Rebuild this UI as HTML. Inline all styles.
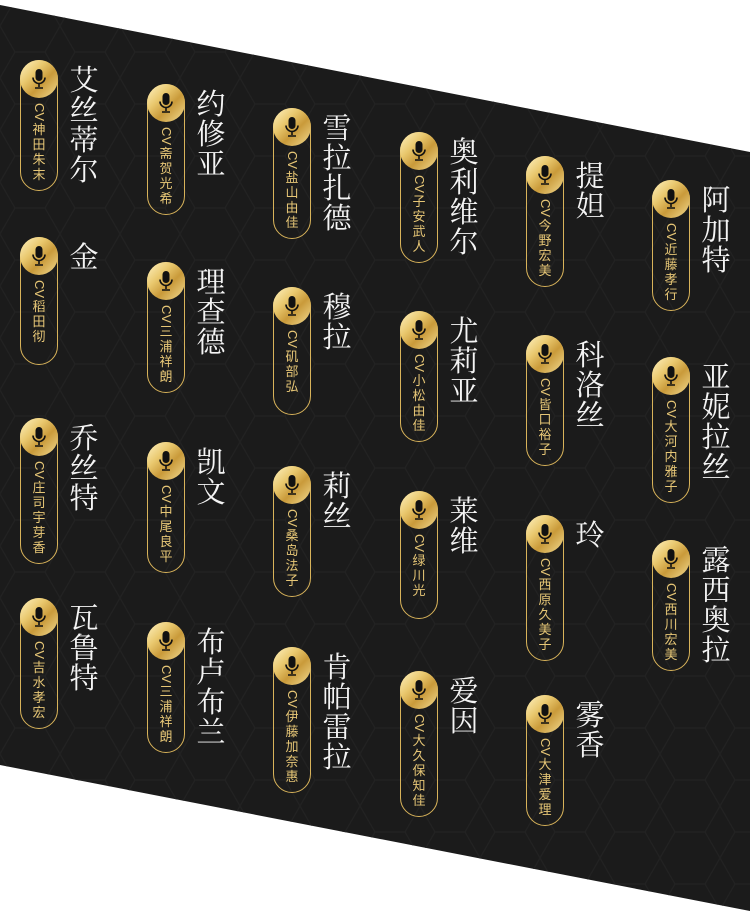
<!DOCTYPE html>
<html><head><meta charset="utf-8"><style>
html,body{margin:0;padding:0;background:#fff;width:750px;height:911px;overflow:hidden;position:relative}
.bg{position:absolute;left:0;top:0;width:750px;height:911px}
.it{position:absolute}
.pill{position:absolute;left:0;top:0;width:36px;border:1px solid #d8b35a;border-radius:19px;min-height:126px;box-sizing:content-box}
.mic{width:38px;height:38px;border-radius:50%;margin:-1px 0 0 -1px;background:linear-gradient(135deg,#fff3c4 0%,#e9c86e 35%,#c99a3a 60%,#f3dc92 100%);display:flex;align-items:center;justify-content:center}
.cv{font-family:"Liberation Sans","Noto Sans CJK SC",sans-serif;font-size:13px;color:#e6c676;margin:4px auto 8px;width:14px;line-height:15px;text-align:center;word-break:break-all}
.cv b{font-weight:normal;display:block;transform:rotate(90deg);font-size:13px;height:20px;line-height:20px;width:20px;margin-left:-3px}
.nm{position:absolute;left:47px;top:6px;width:34px;font-family:"Liberation Serif","Noto Serif CJK SC",serif;font-size:29px;color:#f4f4f4;line-height:30px;text-align:center;word-break:break-all}
</style></head><body>
<svg class="bg" viewBox="0 0 750 911">
<defs><pattern id="h" width="60" height="52" patternUnits="userSpaceOnUse"><path d="M15 0L45 0L60 26L45 52L15 52L0 26Z" fill="none" stroke="#222" stroke-width="1.2"/></pattern></defs>
<polygon points="0,5 750,152 750,911 0,765" fill="#1b1b1b"/>
<polygon points="0,5 750,152 750,911 0,765" fill="url(#h)"/>
</svg>
<div id="c"></div>
<script>
var d=[
[[60,"艾丝蒂尔","神田朱末"],[237,"金","稻田彻"],[418,"乔丝特","庄司宇芽香"],[598,"瓦鲁特","吉水孝宏"]],
[[84,"约修亚","斋贺光希"],[262,"理查德","三浦祥朗"],[442,"凯文","中尾良平"],[622,"布卢布兰","三浦祥朗"]],
[[108,"雪拉扎德","盐山由佳"],[287,"穆拉","矶部弘"],[466,"莉丝","桑岛法子"],[647,"肯帕雷拉","伊藤加奈惠"]],
[[132,"奥利维尔","子安武人"],[311,"尤莉亚","小松由佳"],[491,"莱维","绿川光"],[671,"爱因","大久保知佳"]],
[[156,"提妲","今野宏美"],[335,"科洛丝","皆口裕子"],[515,"玲","西原久美子"],[695,"雾香","大津爱理"]],
[[180,"阿加特","近藤孝行"],[357,"亚妮拉丝","大河内雅子"],[540,"露西奥拉","西川宏美"]]];
var xs=[20,147,273,400,526,652],h="";
var mic='<svg width="16" height="22" viewBox="0 0 16 22"><rect x="4.5" y="1" width="7" height="12" rx="3.5" fill="#111"/><path d="M2 9.5a6 6 0 0 0 12 0" fill="none" stroke="#111" stroke-width="1.6"/><path d="M8 15.5V19M4 20h8" stroke="#111" stroke-width="1.6" fill="none"/></svg>';
d.forEach(function(c,i){c.forEach(function(r){
h+='<div class="it" style="left:'+xs[i]+'px;top:'+r[0]+'px"><div class="pill"><div class="mic">'+mic+'</div><div class="cv"><b>CV</b>'+r[2]+'</div></div><div class="nm">'+r[1]+'</div></div>';
});});
document.getElementById("c").innerHTML=h;
</script>
</body></html>
